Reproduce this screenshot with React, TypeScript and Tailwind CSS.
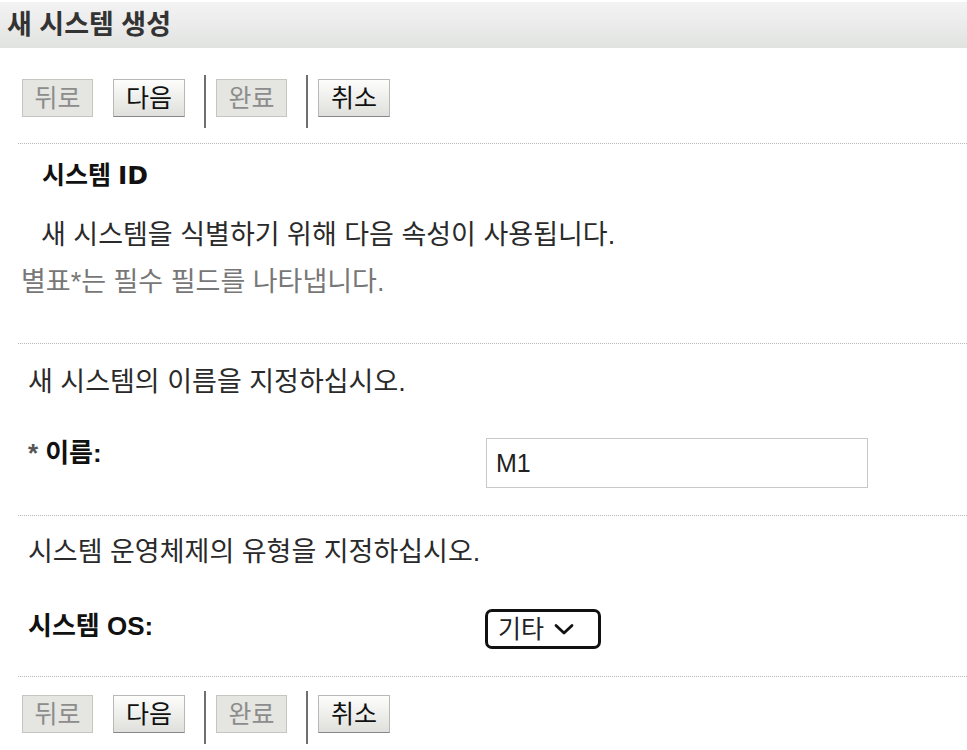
import React from "react";

const FONT = {
  fontFamily: '"Liberation Sans", "Noto Sans CJK KR", sans-serif',
};

function Btn({ label, disabled }: { label: string; disabled?: boolean }) {
  return disabled ? (
    <div className="mt-[4px] flex h-[38px] w-[71px] items-center justify-center border border-[#c6c6c1] bg-[#e5e5e1] text-[25px] leading-none text-[#8c8c8c]">
      {label}
    </div>
  ) : (
    <div className="mt-[4px] flex h-[38px] w-[72px] items-center justify-center border border-[#b8b8b4] border-b-[#86868a] bg-gradient-to-b from-[#fdfdfc] to-[#dfdfdb] text-[25px] leading-none text-[#111]">
      {label}
    </div>
  );
}

function Sep() {
  return <div className="h-[53px] w-[2px] bg-[#6f6f6f]" />;
}

function Toolbar({ className }: { className: string }) {
  return (
    <div className={"flex h-[53px] items-start pl-[22px] " + className}>
      <Btn label="뒤로" disabled />
      <div className="ml-[20px]">
        <Btn label="다음" />
      </div>
      <div className="ml-[19px]">
        <Sep />
      </div>
      <div className="ml-[10px]">
        <Btn label="완료" disabled />
      </div>
      <div className="ml-[19px]">
        <Sep />
      </div>
      <div className="ml-[10px]">
        <Btn label="취소" />
      </div>
    </div>
  );
}

function Dotted({ className }: { className: string }) {
  return <div className={"ml-[18px] border-t border-dotted border-[#b8b8b8] " + className} />;
}

export default function App() {
  return (
    <div className="h-[750px] w-[967px] overflow-hidden bg-white" style={FONT}>
      <div className="mt-[2px] flex h-[46px] items-center bg-gradient-to-b from-[#f3f3f3] to-[#e1e3e1] pl-[7px] text-[27px] font-bold leading-none text-[#333]">
        새 시스템 생성
      </div>

      <Toolbar className="mt-[27px]" />

      <Dotted className="mt-[15px]" />

      <div className="mt-[16px] flex h-[30px] items-center pl-[42px] text-[25px] font-bold leading-none text-[#111]">
        시스템
        <span className="ml-[7px]" style={{ fontFamily: '"DejaVu Sans", sans-serif' }}>
          ID
        </span>
      </div>
      <div className="mt-[30px] flex h-[30px] items-center pl-[41px] text-[27px] leading-none text-[#2a2a2a]">
        새 시스템을 식별하기 위해 다음 속성이 사용됩니다.
      </div>
      <div className="mt-[17px] flex h-[30px] items-center pl-[21px] text-[27px] leading-none text-[#777]">
        별표*는 필수 필드를 나타냅니다.
      </div>

      <Dotted className="mt-[46px]" />

      <div className="mt-[23px] flex h-[30px] items-center pl-[28px] text-[27px] leading-none text-[#2a2a2a]">
        새 시스템의 이름을 지정하십시오.
      </div>

      <div className="mt-[41px] flex items-start">
        <div className="flex h-[30px] w-[486px] items-center pl-[28px] text-[26px] font-bold leading-none text-[#111]">
          <span className="mr-[7px] text-[#555]">*</span>이름:
        </div>
        <div className="flex h-[50px] w-[382px] items-center border border-[#c8c8c8] bg-white pl-[9px] text-[25px] leading-none text-[#222]">
          M1
        </div>
      </div>

      <Dotted className="mt-[27px]" />

      <div className="mt-[21px] flex h-[30px] items-center pl-[28px] text-[27px] leading-none text-[#2a2a2a]">
        시스템 운영체제의 유형을 지정하십시오.
      </div>

      <div className="mt-[42px] flex items-start">
        <div className="mt-[2px] flex h-[30px] w-[485px] items-center pl-[28px] text-[26px] font-bold leading-none text-[#111]">
          시스템 OS:
        </div>
        <div className="flex h-[40px] w-[116px] items-center rounded-[7px] border-[3px] border-[#111] bg-white pl-[10px] text-[25px] leading-none text-[#222]">
          기타
          <svg className="ml-[10px]" width="20" height="12" viewBox="0 0 20 12" fill="none">
            <path d="M2 2.5 L10 10 L18 2.5" stroke="#111" strokeWidth="2.8" strokeLinecap="round" strokeLinejoin="round" />
          </svg>
        </div>
      </div>

      <Dotted className="mt-[27px]" />

      <Toolbar className="mt-[14px]" />
    </div>
  );
}
